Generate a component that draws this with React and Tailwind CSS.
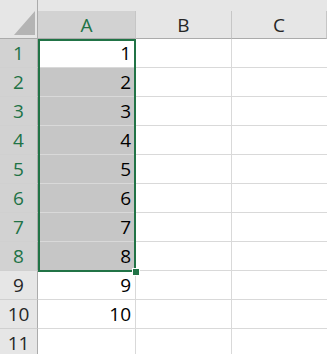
const cols = [
  { label: "A", w: "w-[98px]", selected: true },
  { label: "B", w: "w-[96px]" },
  { label: "C", w: "flex-1" },
];

const rows = [1, 2, 3, 4, 5, 6, 7, 8, 9, 10, 11];
const values = { 1: 1, 2: 2, 3: 3, 4: 4, 5: 5, 6: 6, 7: 7, 8: 8, 9: 9, 10: 10 };

function isSel(r) {
  return r >= 1 && r <= 8;
}

export default function App() {
  return (
    <div
      className="relative w-[327px] h-[354px] overflow-hidden bg-white text-black"
      style={{ fontFamily: '"Open Sans", "Noto Sans", sans-serif' }}
    >
      {/* column headers */}
      <div className="flex h-[39px] bg-[#e6e6e6]">
        <div className="w-[38px] shrink-0 relative border-r border-b border-[#ababab]">
          <svg className="absolute left-[14px] top-[11px]" width="22" height="25" viewBox="0 0 22 25">
            <polygon points="21,0 21,24 0,24" fill="#b4b4b4" />
          </svg>
        </div>
        {cols.map((c) => (
          <div key={c.label} className={`${c.w} shrink-0 flex flex-col`}>
            <div className="h-[11px]" />
            <div
              className={`flex-1 flex items-center justify-center border-r border-b border-r-[#c6c6c6] border-b-[#ababab] text-[19px] leading-none pt-[2px] ${
                c.selected ? "bg-[#d2d2d2] text-[#217346]" : "text-[#262626]"
              }`}
            >
              {c.label}
            </div>
          </div>
        ))}
      </div>

      {rows.map((r) => (
        <div key={r} className="flex h-[29px]">
          <div
            className={`w-[38px] shrink-0 flex items-center justify-center border-r border-b border-r-[#ababab] border-b-[#d0d0d0] text-[19px] leading-none ${
              isSel(r) ? "bg-[#d2d2d2] text-[#217346]" : "bg-[#e6e6e6] text-[#262626]"
            }`}
          >
            {r}
          </div>
          <div
            className={`w-[98px] shrink-0 flex items-center justify-end pr-[4px] border-r border-b border-[#d9d9d9] text-[19px] leading-none ${
              isSel(r) && r !== 1 ? "bg-[#c6c6c6]" : "bg-white"
            }`}
          >
            {values[r]}
          </div>
          <div className="w-[96px] shrink-0 border-r border-b border-[#d9d9d9]" />
          <div className="flex-1 border-b border-[#d9d9d9]" />
        </div>
      ))}

      {/* selection box */}
      <div className="absolute left-[38px] top-[39px] w-[98px] h-[233px] border-2 border-[#217346] pointer-events-none" />
      <div className="absolute left-[132px] top-[268px] w-[6px] h-[6px] bg-[#217346] border border-white box-content" />
    </div>
  );
}
